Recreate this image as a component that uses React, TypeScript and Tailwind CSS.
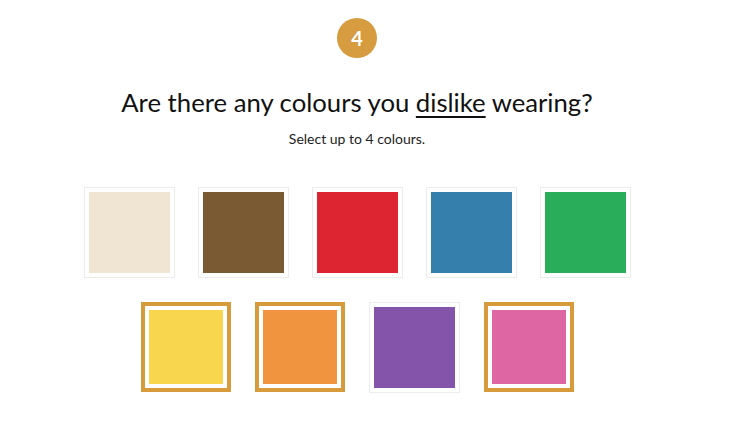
import React from 'react';

interface Swatch {
  name: string;
  hex: string;
  selected: boolean;
}

const topRow: Swatch[] = [
  { name: 'Cream', hex: '#f0e4d3', selected: false },
  { name: 'Brown', hex: '#7a5a33', selected: false },
  { name: 'Red', hex: '#dc2530', selected: false },
  { name: 'Blue', hex: '#347fab', selected: false },
  { name: 'Green', hex: '#2aad5a', selected: false },
];

const bottomRow: Swatch[] = [
  { name: 'Yellow', hex: '#f8d74f', selected: true },
  { name: 'Orange', hex: '#f09440', selected: true },
  { name: 'Purple', hex: '#8454aa', selected: false },
  { name: 'Pink', hex: '#de67a3', selected: true },
];

const SwatchButton: React.FC<{ swatch: Swatch }> = ({ swatch }) => (
  <button
    aria-label={swatch.name}
    className={
      swatch.selected
        ? 'w-[90px] h-[90px] border-4 border-[#d89b3c] bg-white p-[4px] box-border'
        : 'w-[91px] h-[91px] border border-[#ececec] bg-white p-[4px] box-border'
    }
  >
    <div className="w-full h-full" style={{ backgroundColor: swatch.hex }} />
  </button>
);

export default function App() {
  return (
    <div className="w-[733px] h-[427px] bg-white pr-[19px]" style={{ fontFamily: 'Lato, "Liberation Sans", sans-serif' }}>
      <div className="flex flex-col items-center pt-[18px]">
        <div className="w-10 h-10 rounded-full bg-[#d69c3f] text-white flex items-center justify-center text-[20px] font-bold">
          4
        </div>

        <h1 className="mt-[29px] text-[25.7px] leading-[30px] text-[#111]">
          Are there any colours you <span className="underline decoration-[2px] underline-offset-[4px]">dislike</span> wearing?
        </h1>
        <p className="mt-[13px] text-[14px] leading-[17px] text-[#222]">Select up to 4 colours.</p>

        <div className="mt-[40px] flex gap-[23px]">
          {topRow.map(s => (
            <SwatchButton key={s.name} swatch={s} />
          ))}
        </div>
        <div className="mt-[24px] flex gap-[24px]">
          {bottomRow.map(s => (
            <SwatchButton key={s.name} swatch={s} />
          ))}
        </div>
      </div>
    </div>
  );
}
